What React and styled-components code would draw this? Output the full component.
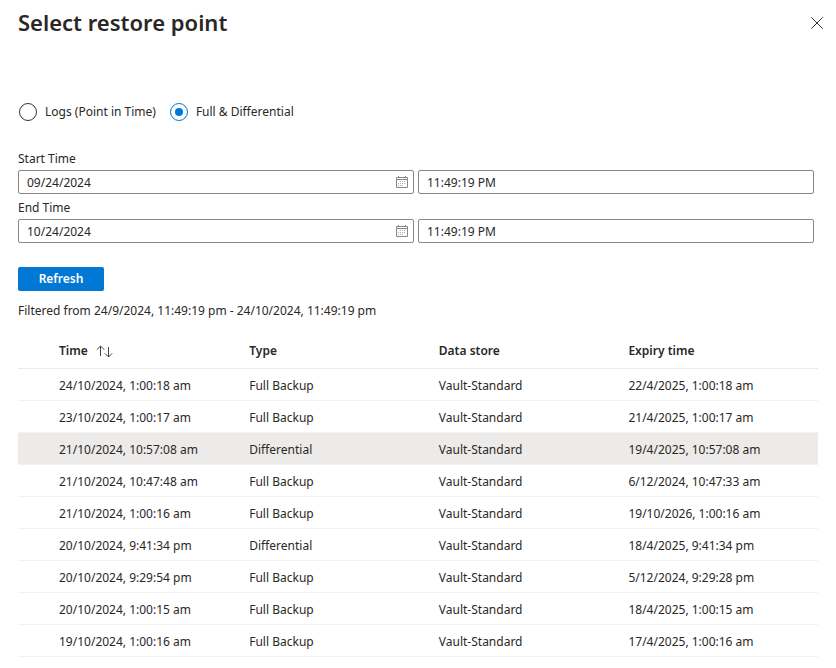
import React, { useState } from "react"
import styled, { createGlobalStyle } from "styled-components"

const GlobalStyle = createGlobalStyle`
  * {
    box-sizing: border-box;
  }

  body {
    margin: 0;
    background: #fff;
    color: #292827;
    font-family: "Segoe UI", "Noto Sans", "Open Sans", sans-serif;
    font-size: 12px;
    line-height: 20px;
  }

  button,
  input {
    font: inherit;
    color: inherit;
  }
`

const Blade = styled.main`
  padding: 6px 18px 10px;
`

const Header = styled.header`
  display: flex;
  align-items: flex-start;
  justify-content: space-between;
  height: 34px;
  margin-right: -8px;

  h1 {
    margin: 0;
    font-size: 22px;
    font-weight: 600;
    line-height: 32px;
  }
`

const CloseButton = styled.button`
  display: flex;
  align-items: center;
  justify-content: center;
  width: 18px;
  height: 34px;
  padding: 0;
  border: 0;
  background: none;
  cursor: pointer;
`

const RadioGroup = styled.div`
  display: flex;
  gap: 13px;
  margin: 62px 0 26px;
`

const RadioLabel = styled.label`
  display: flex;
  align-items: center;
  gap: 8px;
  height: 20px;
  line-height: 22px;
  cursor: pointer;
`

const Radio = styled.input.attrs({ type: "radio" })`
  appearance: none;
  display: grid;
  place-items: center;
  width: 18px;
  height: 18px;
  margin: 0 0 0 1px;
  border: 1px solid #323130;
  border-radius: 50%;

  &:checked {
    border-color: #0078d4;
  }

  &:checked::before {
    content: "";
    width: 8px;
    height: 8px;
    border-radius: 50%;
    background: #0078d4;
  }
`

const Field = styled.div`
  margin: 0 4px 3px 0;

  label {
    display: block;
    line-height: 22px;
  }
`

const Inputs = styled.div`
  display: grid;
  grid-template-columns: 1fr 1fr;
  gap: 4px;
`

const InputBox = styled.div`
  display: flex;
  align-items: center;
  height: 24px;
  padding: 0 5px 0 8px;
  border: 1px solid #8a8886;
  border-radius: 2px;

  &:focus-within {
    border-color: #0078d4;
  }

  input {
    flex: 1;
    min-width: 0;
    height: 22px;
    padding: 0;
    border: 0;
    outline: 0;
    background: none;
  }
`

const RefreshButton = styled.button`
  display: block;
  min-width: 86px;
  height: 24px;
  margin: 24px 0 10px;
  padding: 0 20px;
  border: 0;
  border-radius: 2px;
  background: #0078d4;
  color: #fff;
  font-weight: 600;
  line-height: 22px;
  cursor: pointer;
`

const FilterText = styled.p`
  margin: 0 0 11px;
`

const Table = styled.table`
  width: 100%;
  table-layout: fixed;
  border-collapse: separate;
  border-spacing: 0;

  th,
  td {
    height: 32px;
    padding: 2px 0 0;
    border-bottom: 1px solid #f3f2f1;
    text-align: left;
    white-space: nowrap;
  }

  th {
    height: 37px;
    border-color: #edebe9;
    font-weight: 600;
  }

  th:not(:first-child) {
    width: 23.7%;
  }

  th:first-child,
  td:first-child {
    padding-left: 41px;
  }
`

const Row = styled.tr`
  cursor: pointer;

  td {
    background: ${props => (props.$selected ? "#edebe9" : "transparent")};
    background-clip: padding-box;
  }
`

const SortButton = styled.button`
  display: flex;
  align-items: center;
  gap: 8px;
  padding: 0;
  border: 0;
  background: none;
  cursor: pointer;
`

const CloseIcon = () => (
  <svg width="12" height="12" viewBox="0 0 12 12" stroke="#323130" fill="none">
    <path d="M0.3 0.3L11.7 11.7M11.7 0.3L0.3 11.7" />
  </svg>
)

const SortIcon = () => (
  <svg width="17" height="13" viewBox="0 0 17 13" stroke="#484644" fill="none">
    <path d="M4.5 11V1M0.8 4.7L4.5 1L8.2 4.7" />
    <path d="M12.5 2V12M8.8 8.3L12.5 12L16.2 8.3" />
  </svg>
)

const CalendarIcon = () => (
  <svg width="12" height="12" viewBox="0 0 12 12" stroke="#8a8886" fill="none">
    <path d="M0.5 1.5H11.5V11.5H0.5Z" />
    <path d="M2.5 0V2M9.5 0V2M0.5 3.5H11.5" />
    <path
      stroke="#b3b0ad"
      strokeDasharray="1 1"
      d="M4 5.5H10M2 7.5H10M2 9.5H8"
    />
  </svg>
)

const points = [
  ["24/10/2024, 1:00:18 am", "Full Backup", "22/4/2025, 1:00:18 am"],
  ["23/10/2024, 1:00:17 am", "Full Backup", "21/4/2025, 1:00:17 am"],
  ["21/10/2024, 10:57:08 am", "Differential", "19/4/2025, 10:57:08 am"],
  ["21/10/2024, 10:47:48 am", "Full Backup", "6/12/2024, 10:47:33 am"],
  ["21/10/2024, 1:00:16 am", "Full Backup", "19/10/2026, 1:00:16 am"],
  ["20/10/2024, 9:41:34 pm", "Differential", "18/4/2025, 9:41:34 pm"],
  ["20/10/2024, 9:29:54 pm", "Full Backup", "5/12/2024, 9:29:28 pm"],
  ["20/10/2024, 1:00:15 am", "Full Backup", "18/4/2025, 1:00:15 am"],
  ["19/10/2024, 1:00:16 am", "Full Backup", "17/4/2025, 1:00:16 am"],
]

function DateTimeField({ id, label, date, time }) {
  return (
    <Field>
      <label htmlFor={id}>{label}</label>
      <Inputs>
        <InputBox>
          <input id={id} defaultValue={date} />
          <CalendarIcon />
        </InputBox>
        <InputBox>
          <input aria-label={`${label} (time)`} defaultValue={time} />
        </InputBox>
      </Inputs>
    </Field>
  )
}

export default function App() {
  const [mode, setMode] = useState("full")
  const [selected, setSelected] = useState(2)

  return (
    <>
      <GlobalStyle />
      <Blade>
        <Header>
          <h1>Select restore point</h1>
          <CloseButton aria-label="Close">
            <CloseIcon />
          </CloseButton>
        </Header>
        <RadioGroup>
          <RadioLabel>
            <Radio
              name="mode"
              checked={mode === "logs"}
              onChange={() => setMode("logs")}
            />
            Logs (Point in Time)
          </RadioLabel>
          <RadioLabel>
            <Radio
              name="mode"
              checked={mode === "full"}
              onChange={() => setMode("full")}
            />
            Full & Differential
          </RadioLabel>
        </RadioGroup>
        <DateTimeField
          id="start"
          label="Start Time"
          date="09/24/2024"
          time="11:49:19 PM"
        />
        <DateTimeField
          id="end"
          label="End Time"
          date="10/24/2024"
          time="11:49:19 PM"
        />
        <RefreshButton>Refresh</RefreshButton>
        <FilterText>
          Filtered from 24/9/2024, 11:49:19 pm - 24/10/2024, 11:49:19 pm
        </FilterText>
        <Table>
          <thead>
            <tr>
              <th>
                <SortButton>
                  Time <SortIcon />
                </SortButton>
              </th>
              <th>Type</th>
              <th>Data store</th>
              <th>Expiry time</th>
            </tr>
          </thead>
          <tbody>
            {points.map(([time, type, expiry], i) => (
              <Row
                key={time}
                $selected={i === selected}
                onClick={() => setSelected(i)}
              >
                <td>{time}</td>
                <td>{type}</td>
                <td>Vault-Standard</td>
                <td>{expiry}</td>
              </Row>
            ))}
          </tbody>
        </Table>
      </Blade>
    </>
  )
}
